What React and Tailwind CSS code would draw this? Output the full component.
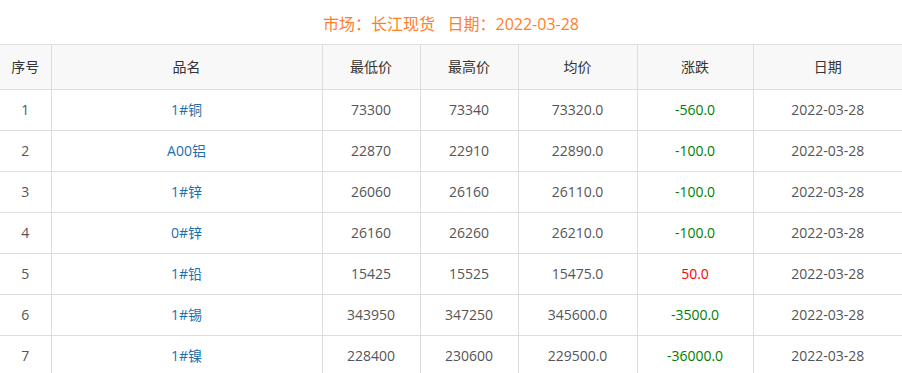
import React from 'react';

const rows = [
  ['1', '1#铜', '73300', '73340', '73320.0', '-560.0'],
  ['2', 'A00铝', '22870', '22910', '22890.0', '-100.0'],
  ['3', '1#锌', '26060', '26160', '26110.0', '-100.0'],
  ['4', '0#锌', '26160', '26260', '26210.0', '-100.0'],
  ['5', '1#铅', '15425', '15525', '15475.0', '50.0'],
  ['6', '1#锡', '343950', '347250', '345600.0', '-3500.0'],
  ['7', '1#镍', '228400', '230600', '229500.0', '-36000.0'],
];

const heads = ['序号', '品名', '最低价', '最高价', '均价', '涨跌', '日期'];
const widths = ['w-[51px]', 'w-[271px]', 'w-[98px]', 'w-[98px]', 'w-[119px]', 'w-[116px]', 'w-[149px]'];

export default function App() {
  return (
    <div className="w-[902px] bg-white text-[14px] text-[#555]" style={{ fontFamily: '"Open Sans", "Noto Sans CJK SC", sans-serif' }}>
      <div className="h-[44px] flex items-center justify-center pt-[4px] text-[16px] text-[#ff7f27]">
        市场：长江现货&nbsp;&nbsp;&nbsp;日期：2022-03-28
      </div>
      <table className="w-full table-fixed border-collapse">
        <thead>
          <tr className="bg-[#f8f8f8]">
            {heads.map((h, i) => (
              <th
                key={h}
                className={`${widths[i]} h-[45px] p-0 pb-[2px] font-normal text-[#333] border-t border-b border-[#dddddd] ${i > 0 ? 'border-l' : ''}`}
              >
                {h}
              </th>
            ))}
          </tr>
        </thead>
        <tbody>
          {rows.map((r) => (
            <tr key={r[0]}>
              <td className="h-[41px] p-0 pb-[2px] text-center border-b border-[#dddddd]">{r[0]}</td>
              <td className="p-0 pb-[2px] text-center border-b border-l border-[#dddddd] text-[#1a6fb0]">{r[1]}</td>
              <td className="p-0 pb-[2px] text-center border-b border-l border-[#dddddd]">{r[2]}</td>
              <td className="p-0 pb-[2px] text-center border-b border-l border-[#dddddd]">{r[3]}</td>
              <td className="p-0 pb-[2px] text-center border-b border-l border-[#dddddd]">{r[4]}</td>
              <td className={`p-0 pb-[2px] text-center border-b border-l border-[#dddddd] ${r[5].startsWith('-') ? 'text-[#008000]' : 'text-[#ff0000]'}`}>{r[5]}</td>
              <td className="p-0 pb-[2px] text-center border-b border-l border-[#dddddd]">2022-03-28</td>
            </tr>
          ))}
        </tbody>
      </table>
    </div>
  );
}
